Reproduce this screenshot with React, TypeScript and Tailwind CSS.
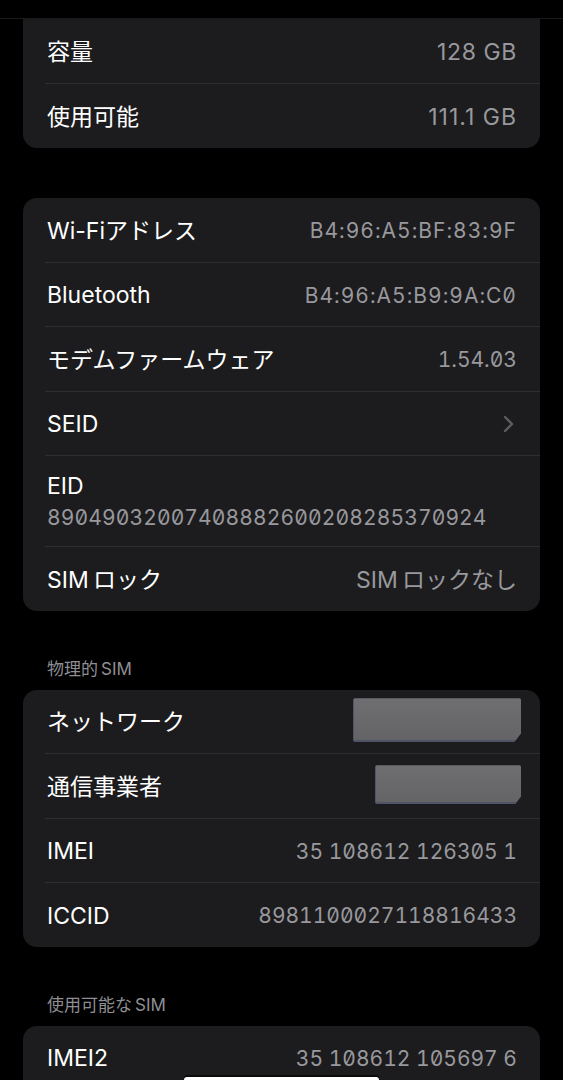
import React from "react";

const font = { fontFamily: "Inter, 'Noto Sans CJK JP', sans-serif" };

function Sep() {
  return <div className="ml-[22px] h-px bg-[#2e2e31]" />;
}

function Row({
  label,
  value,
  chevron,
  mono,
  track,
  h = 63.5,
}: {
  label: string;
  value?: string;
  chevron?: boolean;
  mono?: boolean;
  track?: number;
  h?: number;
}) {
  return (
    <div className="flex items-center justify-between pl-[24px] pr-[23px] pt-[2px]" style={{ height: h }}>
      <span className="text-[23px] text-white">{label}</span>
      {value &&
        (mono ? (
          <span
            className="text-[21px] text-[#98989d] tabular-nums slashed-zero"
            style={track ? { letterSpacing: track } : undefined}
          >
            {value}
          </span>
        ) : (
          <span className="text-[23px] text-[#98989d]" style={track ? { letterSpacing: track } : undefined}>
            {value}
          </span>
        ))}
      {chevron && (
        <svg width="11" height="18" viewBox="0 0 11 18" className="mr-[3px]">
          <path d="M2 2 L9 9 L2 16" fill="none" stroke="#5c5c61" strokeWidth="2.4" strokeLinecap="round" strokeLinejoin="round" />
        </svg>
      )}
    </div>
  );
}

function Redact({ w, h }: { w: number; h: number }) {
  return (
    <div
      className="rounded-[2px] bg-gradient-to-b from-[#6f6f71] to-[#646466] border-b-2 border-l border-[#4f5566] [clip-path:polygon(0_0,100%_0,100%_80%,96%_100%,0_100%)]"
      style={{ width: w, height: h }}
    />
  );
}

function RedactRow({ label, w, h, mt }: { label: string; w: number; h: number; mt: number }) {
  return (
    <div className="flex h-[63.5px] items-center justify-between pl-[24px] pr-[19px] pt-[2px]">
      <span className="text-[23px] text-white">{label}</span>
      <div style={{ marginTop: mt }}>
        <Redact w={w} h={h} />
      </div>
    </div>
  );
}

function Header({ text }: { text: string }) {
  return (
    <div className="mt-[48px] mb-[11px] h-[20px] pl-[47px] text-[17px] leading-[20px] text-[#8e8e93]">{text}</div>
  );
}

export default function App() {
  return (
    <div className="relative h-[1080px] w-[563px] overflow-hidden bg-black" style={font}>
      <div className="h-[19px] border-b border-[#1a1a1a] bg-black" />
      <div className="mx-[23px] rounded-b-[14px] bg-[#1c1c1e]">
        <Row label="容量" value="128 GB" h={64} track={0.6} />
        <Sep />
        <Row label="使用可能" value="111.1 GB" h={64} track={1} />
      </div>

      <div className="mx-[23px] mt-[50px] rounded-[14px] bg-[#1c1c1e]">
        <Row label="Wi-Fiアドレス" value="B4:96:A5:BF:83:9F" mono track={1} />
        <Sep />
        <Row label="Bluetooth" value="B4:96:A5:B9:9A:C0" mono track={1} />
        <Sep />
        <Row label="モデムファームウェア" value="1.54.03" mono />
        <Sep />
        <Row label="SEID" chevron />
        <Sep />
        <div className="h-[90px] pl-[24px] pt-[16px]">
          <div className="text-[23px] leading-[28px] text-white">EID</div>
          <div className="mt-[4px] text-[21px] leading-[28px] tracking-[0.12px] text-[#98989d] tabular-nums slashed-zero">
            89049032007408882600208285370924
          </div>
        </div>
        <Sep />
        <Row label={"SIM\u2009ロック"} value={"SIM\u2009ロックなし"} />
      </div>

      <Header text={"物理的\u2009SIM"} />
      <div className="mx-[23px] rounded-[14px] bg-[#1c1c1e]">
        <RedactRow label="ネットワーク" w={168} h={44} mt={-4} />
        <Sep />
        <RedactRow label="通信事業者" w={146} h={39} mt={-4} />
        <Sep />
        <Row label="IMEI" value="35 108612 126305 1" mono />
        <Sep />
        <Row label="ICCID" value="8981100027118816433" mono />
      </div>

      <Header text={"使用可能な\u2009SIM"} />
      <div className="mx-[23px] h-[120px] rounded-[14px] bg-[#1c1c1e]">
        <Row label="IMEI2" value="35 108612 105697 6" mono h={64} />
        <Sep />
      </div>

      <div className="absolute left-[184px] top-[1077px] h-[6px] w-[195px] rounded-full bg-white shadow-[0_-2px_0_#0a0a0a]" />
    </div>
  );
}
